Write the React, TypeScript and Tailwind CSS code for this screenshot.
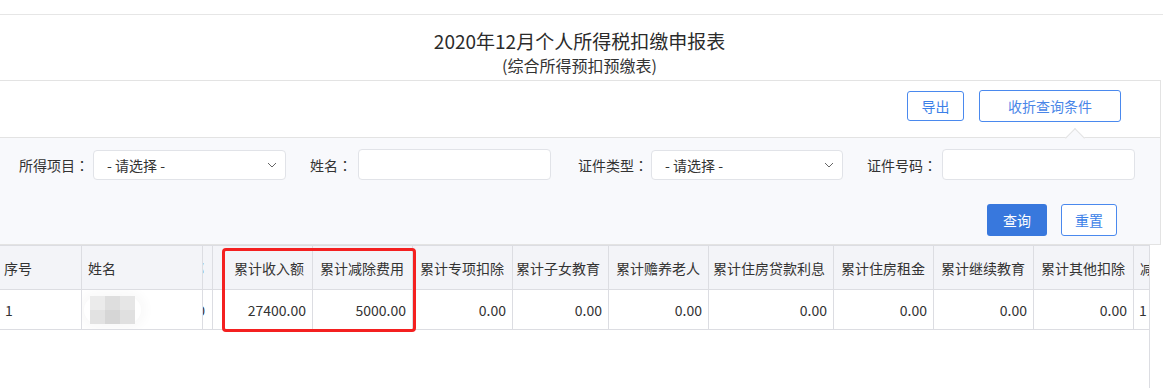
import React from "react";

type Col = { label: string; w?: number; val: string; kind?: "left" | "name" | "partial" | "last" };

const cols: Col[] = [
  { label: "序号", w: 82, val: "1", kind: "left" },
  { label: "姓名", w: 121, val: "", kind: "name" },
  { label: "全部", w: 10, val: "0.00", kind: "partial" },
  { label: "累计收入额", w: 100, val: "27400.00" },
  { label: "累计减除费用", w: 100, val: "5000.00" },
  { label: "累计专项扣除", w: 100, val: "0.00" },
  { label: "累计子女教育", w: 96, val: "0.00" },
  { label: "累计赡养老人", w: 100, val: "0.00" },
  { label: "累计住房贷款利息", w: 125, val: "0.00" },
  { label: "累计住房租金", w: 100, val: "0.00" },
  { label: "累计继续教育", w: 100, val: "0.00" },
  { label: "累计其他扣除", w: 100, val: "0.00" },
  { label: "减除费用", val: "1", kind: "last" },
];

function Chevron() {
  return (
    <svg width="10" height="6" viewBox="0 0 10 6" className="shrink-0">
      <polyline points="1,1 5,5 9,1" fill="none" stroke="#666" strokeWidth="1" />
    </svg>
  );
}

function Select({ w }: { w: string }) {
  return (
    <div className={`${w} h-[30px] bg-white border border-[#e1e3e8] rounded-[4px] flex items-center justify-between pl-[13px] pr-[8px]`}>
      <span className="text-[14px] leading-[20px] text-[#333]">- 请选择 -</span>
      <Chevron />
    </div>
  );
}

function Input({ w }: { w: string }) {
  return <div className={`${w} h-[31px] bg-white border border-[#e1e3e8] rounded-[4px]`} />;
}

function Label({ text, cls }: { text: string; cls: string }) {
  return (
    <span className={`flex items-center ${cls}`}>
      <span>{text}</span>
      <span className="w-[14px] text-center font-['Noto_Sans_CJK_JP',sans-serif]">：</span>
    </span>
  );
}

function Mosaic() {
  const shades = ["#ebebeb", "#dedede", "#e6e6e6", "#e2e2e2", "#d6d6d6", "#e0e0e0"];
  return (
    <div className="rounded-full bg-white shadow-[0_0_10px_6px_rgba(250,250,250,1)] px-[6px]">
      <div className="grid grid-cols-[15px_15px_15px] grid-rows-[14px_14px]">
        {shades.map((c, i) => (
          <div key={i} style={{ background: c }} />
        ))}
      </div>
    </div>
  );
}

export default function App() {
  return (
    <div className="w-[1163px] h-[388px] bg-white overflow-hidden relative font-['Noto_Sans_CJK_SC','Microsoft_YaHei',sans-serif] text-[#333] flex flex-col">
      <div className="h-[15px] shrink-0 border-b border-[#e6e6e6]" />
      <div className="h-[65px] shrink-0 flex flex-col items-center pt-[13px]">
        <div className="text-[19px] leading-[26px] text-[#2b2b2b] -translate-x-[2px]">2020年12月个人所得税扣缴申报表</div>
        <div className="text-[16px] leading-[20px] mt-[1px] text-[#333] -translate-x-[2px]">(综合所得预扣预缴表)</div>
      </div>

      <div className="w-[1161px] shrink-0 border-t border-r border-b border-[#e3e3e3]">
        <div className="h-[56px] flex justify-end items-start pt-[10px] pr-[39px] gap-[15px]">
          <div className="w-[57px] h-[30px] border border-[#4a89ee] rounded-[3px] flex items-center justify-center text-[14px] text-[#3b7fe8]">
            导出
          </div>
          <div className="w-[142px] h-[32px] -mt-[1px] border border-[#4a89ee] rounded-[3px] flex items-center justify-center text-[14px] text-[#4a86e8]">
            收折查询条件
          </div>
        </div>
        <div className="relative border-t border-[#e3e3e3] bg-[#f8f9fc] h-[107px] pt-[11px] pb-[7px] flex flex-col">
          <div className="absolute left-[1068px] top-[-7px] w-[14px] h-[14px] rotate-45 bg-[#f8f9fc] border-t border-l border-[#e3e3e3]" />
          <div className="flex items-center pl-[19px] text-[14px] leading-[20px] text-[#333]">
            <Label text="所得项目" cls="mr-[4px]" />
            <Select w="w-[193px]" />
            <Label text="姓名" cls="ml-[24px] mr-[6px]" />
            <Input w="w-[193px]" />
            <Label text="证件类型" cls="ml-[27px] mr-[3px]" />
            <Select w="w-[192px]" />
            <Label text="证件号码" cls="ml-[24px] mr-[5px]" />
            <Input w="w-[193px]" />
          </div>
          <div className="flex justify-end gap-[14px] pr-[43px] mt-[24px]">
            <div className="w-[60px] h-[32px] bg-[#3878dd] rounded-[3px] flex items-center justify-center text-[14px] text-white">
              查询
            </div>
            <div className="w-[56px] h-[32px] bg-white border border-[#4a89ee] rounded-[3px] flex items-center justify-center text-[14px] text-[#3b7fe8]">
              重置
            </div>
          </div>
        </div>
      </div>

      <div className="w-[1150px] flex-1 border-t border-r border-[#dcdde2] overflow-hidden text-[14px] leading-[20px]">
        <div className="flex h-[44px] bg-[#f3f4f8] border-b border-[#dcdde2]">
          {cols.map((c, i) => (
            <div
              key={i}
              style={c.w ? { width: c.w } : undefined}
              className={`h-full shrink-0 flex items-center overflow-hidden whitespace-nowrap ${
                c.kind === "last" ? "flex-1 pl-[6px]" : "border-r border-[#dcdde2]"
              } ${c.kind === "left" ? "pl-[4px]" : c.kind === "name" ? "pl-[6px]" : c.kind === "last" ? "" : "justify-end pr-[8px]"} ${
                c.kind === "partial" ? "pr-[6px]" : ""
              }`}
            >
              <span className="shrink-0">{c.label}</span>
            </div>
          ))}
        </div>
        <div className="flex h-[40px] border-b border-[#dcdde2] bg-white">
          {cols.map((c, i) => (
            <div
              key={i}
              style={c.w ? { width: c.w } : undefined}
              className={`h-full shrink-0 flex items-center overflow-hidden whitespace-nowrap ${
                c.kind === "last" ? "flex-1 pl-[5px]" : "border-r border-[#dcdde2]"
              } ${c.kind === "left" ? "pl-[5px]" : c.kind === "name" ? "pl-[2px]" : c.kind === "last" ? "" : "justify-end pr-[6px]"} ${
                c.kind === "partial" ? "pr-[7px]" : ""
              }`}
            >
              {c.kind === "name" ? <Mosaic /> : <span className="shrink-0">{c.val}</span>}
            </div>
          ))}
        </div>
      </div>

      <div className="absolute left-[222px] top-[248px] w-[194px] h-[84px] border-[3px] border-[#f42020] rounded-[4px]" />
    </div>
  );
}
